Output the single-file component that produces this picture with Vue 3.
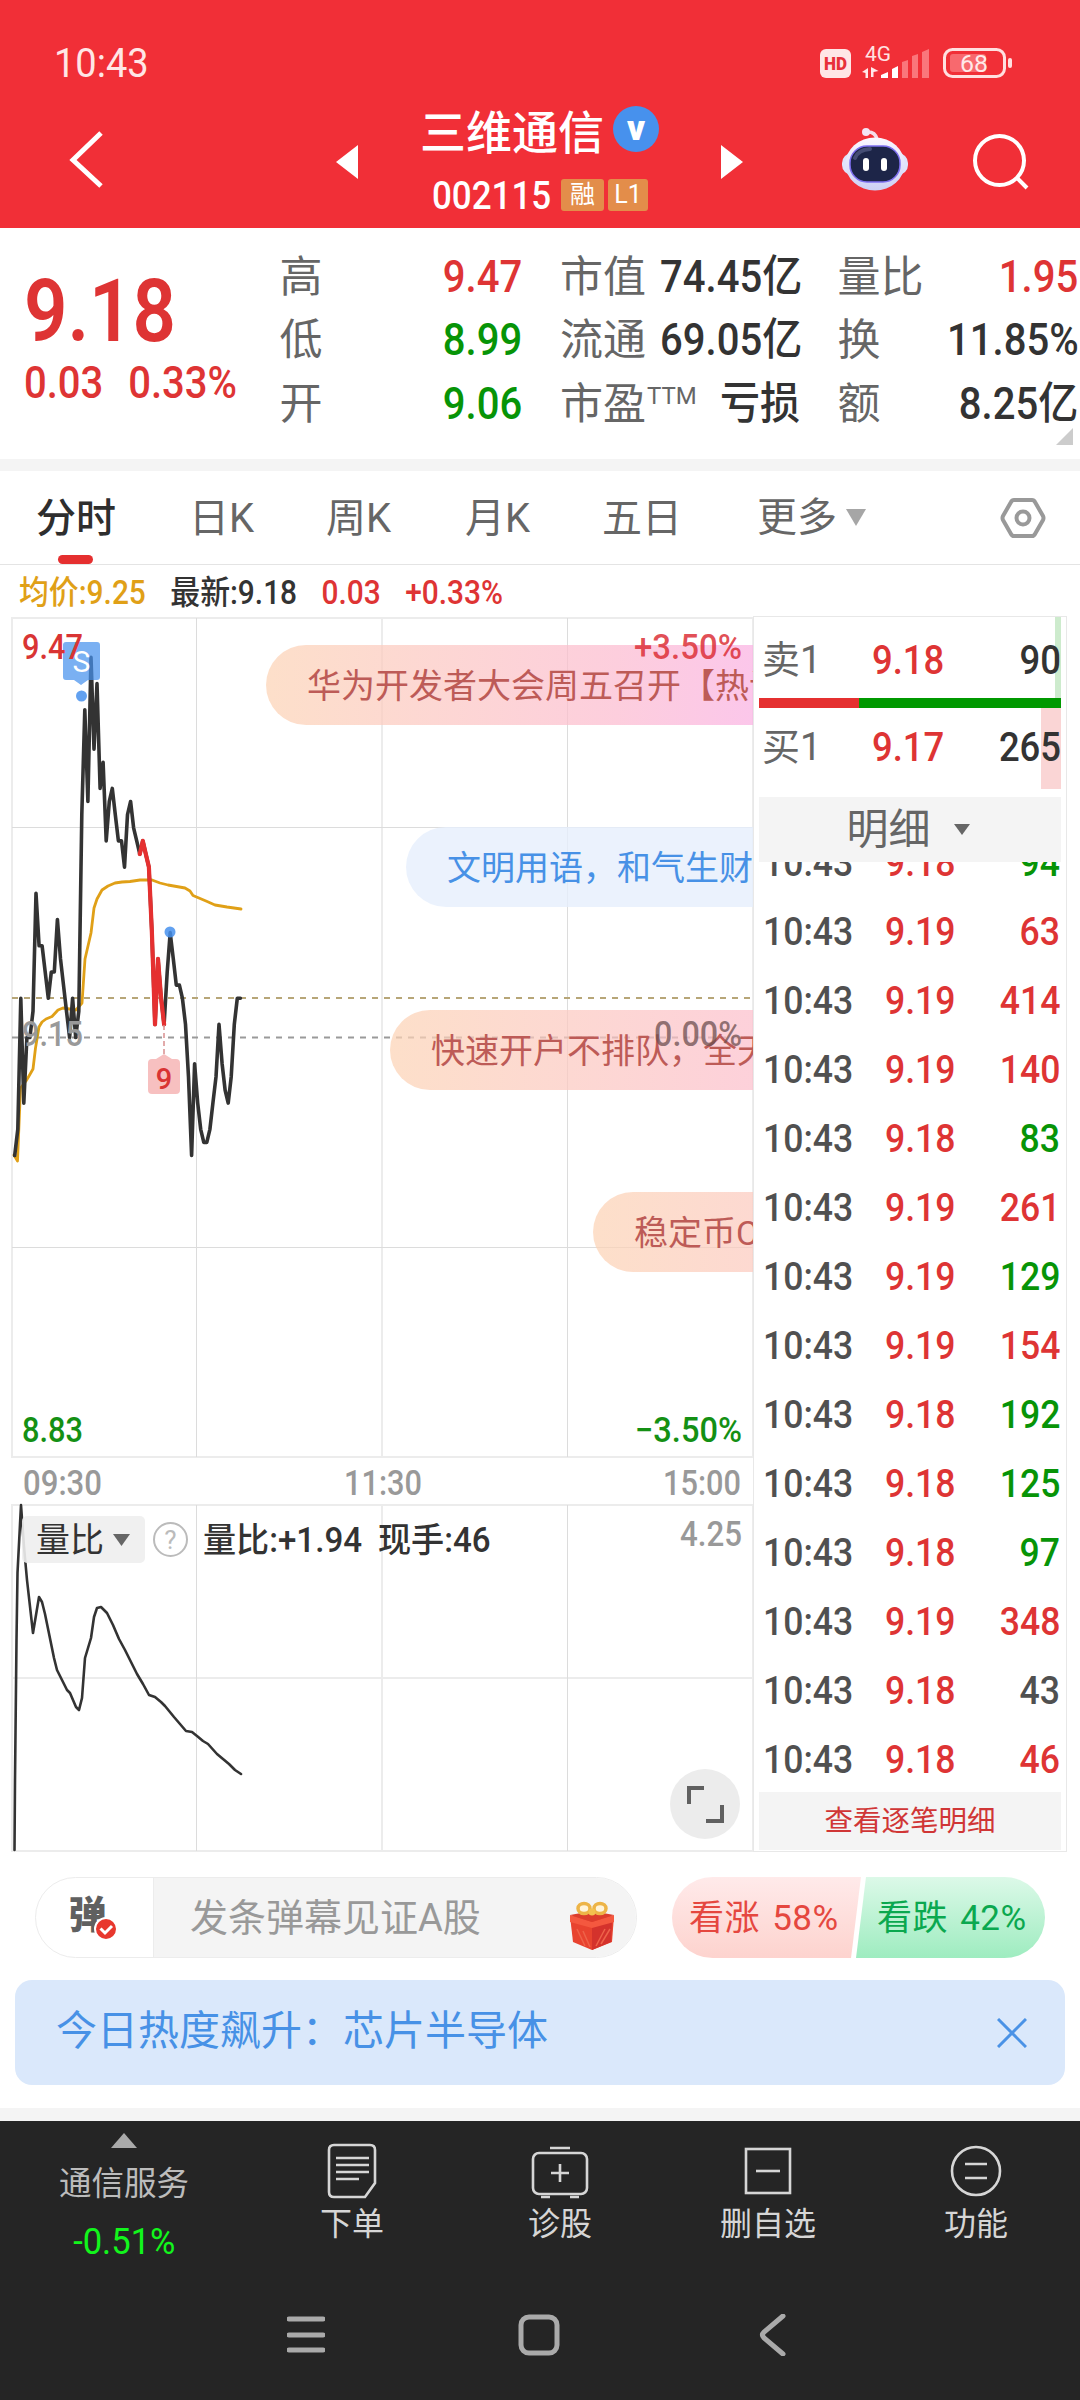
<script setup>
import { computed } from 'vue'

const stats = [
  [
    { label: '高', value: '9.47', tone: 'up' },
    { label: '低', value: '8.99', tone: 'down' },
    { label: '开', value: '9.06', tone: 'down' }
  ],
  [
    { label: '市值', value: '74.45亿' },
    { label: '流通', value: '69.05亿' },
    { label: '市盈', sup: 'TTM', value: '亏损' }
  ],
  [
    { label: '量比', value: '1.95', tone: 'up' },
    { label: '换', value: '11.85%' },
    { label: '额', value: '8.25亿' }
  ]
]

const tabs = ['分时', '日K', '周K', '月K', '五日']

const trades = [
  ['9.18', 94, 'down'],
  ['9.19', 63, 'up'],
  ['9.19', 414, 'up'],
  ['9.19', 140, 'up'],
  ['9.18', 83, 'down'],
  ['9.19', 261, 'up'],
  ['9.19', 129, 'down'],
  ['9.19', 154, 'up'],
  ['9.18', 192, 'down'],
  ['9.18', 125, 'down'],
  ['9.18', 97, 'down'],
  ['9.19', 348, 'up'],
  ['9.18', 43, 'flat'],
  ['9.18', 46, 'up']
]

// one price per minute, from 09:30
const prices = [
  9.06, 9.08, 9.18, 9.10, 9.15, 9.15, 9.17, 9.26, 9.22, 9.22,
  9.20, 9.18, 9.20, 9.20, 9.24, 9.21, 9.19, 9.17, 9.15, 9.18,
  9.15, 9.17, 9.32, 9.40, 9.33, 9.44, 9.37, 9.42, 9.34, 9.36,
  9.30, 9.33, 9.34, 9.32, 9.30, 9.30, 9.28, 9.32, 9.33, 9.31,
  9.30, 9.29, 9.30, 9.29, 9.28, 9.23, 9.16, 9.21, 9.18, 9.16,
  9.20, 9.23, 9.21, 9.19, 9.19, 9.18, 9.16, 9.12, 9.06, 9.13,
  9.10, 9.08, 9.07, 9.07, 9.08, 9.10, 9.12, 9.16, 9.13, 9.11,
  9.10, 9.12, 9.16, 9.18, 9.18
]

const toPoint = (p, i) =>
  `${(14.7 + i * 3.05).toFixed(1)},${(618 + (9.47 - p) * 1311).toFixed(1)}`

const points = computed(() => prices.map(toPoint))
const priceLine = computed(() => points.value.join(' '))
const nineLine = computed(() => points.value.slice(41, 50).join(' '))

const avgLine =
  '14,1155 17.5,1161 20.5,1088 26,1081 29,1076 33,1069 35.5,1048 39,1027 42,1022 46,1019 52,1016.5 58,1010 63,1008 76,1010 82,1003 85,959 91,933 94,908 97,899 102,890 108,886 115,883 122,882 130,881.5 140,880 152,880 160,883 168,885 185,888 190,891 193,895.5 206,901 215,905 227,907 241,909'

const ratioLine =
  '14.5,1850 15,1780 16.5,1640 17.5,1573 21,1505 24,1547 27,1580 33,1633 39,1597 42,1602 45,1614 54,1658 57,1670 67,1690 70,1693 76,1707 79,1710 82,1698 85,1658 91,1638 94,1617 97,1608 101,1607 107,1613 113,1625 119,1639 125,1650 137,1674 143,1684 149,1695 155,1697 161,1702 165,1706 174,1717 180,1724 186,1731 192,1732 197,1736 203,1741 208,1744 217,1754 229,1764 235,1770 241,1774'
</script>

<template>
  <div class="page">
    <header class="header">
      <div class="status">
        <span class="clock">10:43</span>
        <svg width="200" height="40" viewBox="816 43 200 40">
          <rect x="820" y="49" width="31" height="29" rx="6" fill="#ffe6e6" />
          <text x="824" y="69.5" font-size="18" font-weight="900" fill="#e8303a" textLength="23" lengthAdjust="spacingAndGlyphs">HD</text>
          <text x="865" y="61" font-size="21" fill="#ffe3e3" textLength="26" lengthAdjust="spacingAndGlyphs">4G</text>
          <path d="M862 72l6-4v10h-2.500v-5zM871 67v10h2.500v-5l5-1z" fill="#ffe9e9" />
          <path d="M881 78v-3l7-3v6zM892 78v-9l6-3v12z" fill="#fff" />
          <path d="M902 78V62l6-2v18zM912 78V56l6-2v24zM922 78V52l7-3v29z" fill="#fa767b" />
          <rect x="944.500" y="49.500" width="60" height="27" rx="8" fill="none" stroke="#ffe0e0" stroke-width="3" />
          <rect x="950" y="54" width="36" height="18" rx="3" fill="#f8696e" />
          <rect x="1008" y="58" width="4" height="10" rx="2" fill="#ffe0e0" />
          <text x="960" y="71.500" font-size="24" fill="#ffe9e9" textLength="28" lengthAdjust="spacingAndGlyphs">68</text>
        </svg>
      </div>
      <div class="titlebar">
        <svg class="back" width="40" height="64" viewBox="66 128 40 64">
          <path d="M101 133L73 160l28 26" fill="none" stroke="#fff" stroke-width="5" />
        </svg>
        <svg class="prev" width="22" height="34" viewBox="0 0 22 34"><path d="M22 0v34L0 17z" fill="#fff" /></svg>
        <div class="stock">
          <div class="name">
            <span>三维通信</span>
            <svg width="46" height="46" viewBox="0 0 46 46">
              <circle cx="23" cy="23" r="23" fill="#4791ed" />
              <text x="23" y="34" font-size="35" font-weight="900" text-anchor="middle" fill="#fff">v</text>
            </svg>
          </div>
          <div class="code">
            <span class="digits">002115</span>
            <i class="tag">融</i>
            <i class="tag l1">L1</i>
          </div>
        </div>
        <svg class="next" width="22" height="34" viewBox="0 0 22 34"><path d="M0 0v34l22-17z" fill="#fff" /></svg>
        <svg class="robot" width="68" height="66" viewBox="841 127 68 66">
          <defs>
            <linearGradient id="shell" x1="0" y1="0" x2="0" y2="1">
              <stop offset="0" stop-color="#fbf7ff" />
              <stop offset="1" stop-color="#cdd0f4" />
            </linearGradient>
          </defs>
          <path d="M866 132q9-1 11 7" fill="none" stroke="#f6dcea" stroke-width="3.500" />
          <circle cx="866" cy="132" r="4" fill="#f4e4f4" />
          <rect x="842" y="153" width="66" height="22" rx="10" fill="#dfe3fb" />
          <ellipse cx="875" cy="164" rx="29.500" ry="26.500" fill="url(#shell)" />
          <rect x="850" y="146" width="50" height="36" rx="17" fill="#1d2548" stroke="#7e6ff0" stroke-width="1.500" />
          <path d="M855 158q3-8 15-9" fill="none" stroke="#454d74" stroke-width="4" stroke-linecap="round" />
          <rect x="863" y="158" width="6" height="13" rx="3" fill="#fff" />
          <rect x="881" y="158" width="6" height="13" rx="3" fill="#fff" />
        </svg>
        <svg class="search" width="58" height="58" viewBox="971 132 58 58">
          <circle cx="999.500" cy="160.500" r="24.500" fill="none" stroke="#fff" stroke-width="4" />
          <path d="M1016 177l11 11" stroke="#fff" stroke-width="4" />
        </svg>
      </div>
    </header>

    <section class="quote">
      <div class="price up">
        <div class="big">9.18</div>
        <div class="change"><span>0.03</span><span>0.33%</span></div>
      </div>
      <div v-for="(col, c) in stats" :key="c" class="col">
        <div v-for="s in col" :key="s.label" class="stat">
          <span class="label">{{ s.label }}<sup v-if="s.sup">{{ s.sup }}</sup></span>
          <span class="value" :class="s.tone">{{ s.value }}</span>
        </div>
      </div>
      <svg class="corner" width="17" height="17" viewBox="0 0 17 17"><path d="M17 0v17H0z" fill="#ccc" /></svg>
    </section>

    <nav class="tabs">
      <span v-for="(t, i) in tabs" :key="t" class="tab" :class="{ active: i === 0 }">{{ t }}</span>
      <span class="tab more">更多<svg width="20" height="17" viewBox="0 0 20 17"><path d="M0 0h20L10 17z" fill="#a6a6a6" /></svg></span>
      <svg class="gear" width="46" height="42" viewBox="0 0 46 42">
        <path d="M14 3h18q2 0 3 2l8 14q1 2 0 4l-8 14q-1 2-3 2H14q-2 0-3-2L3 23q-1-2 0-4l8-14q1-2 3-2z" fill="none" stroke="#999" stroke-width="4" />
        <circle cx="23" cy="21" r="6.500" fill="none" stroke="#999" stroke-width="4" />
      </svg>
    </nav>

    <div class="legend">
      <span class="avg">均价:9.25</span>
      <span class="last">最新:9.18</span>
      <span class="up">0.03</span>
      <span class="up">+0.33%</span>
    </div>

    <main class="market">
      <div class="canvas">
        <svg width="754" height="1236" viewBox="0 616 754 1236">
          <g fill="none" stroke="#ececec" stroke-width="2">
            <rect x="12" y="618" width="741" height="839" />
            <rect x="12" y="1505" width="741" height="346" />
            <path d="M382 618v839M382 1505v346M12 1678h741" />
            <path d="M196.500 618v839M567.500 618v839M12 827.500h741M12 1247.500h741M196.500 1505v346M567.500 1505v346" stroke="#dcdcdc" stroke-width="1" />
          </g>
          <path d="M12 998h741" stroke="#b7a678" stroke-width="2" stroke-dasharray="6 6" />
          <path d="M12 1037.500h741" stroke="#9a9a9a" stroke-width="2" stroke-dasharray="6 6" />
          <g fill="none" stroke-linejoin="round" stroke-linecap="round">
            <polyline :points="avgLine" stroke="#e0a017" stroke-width="2.800" />
            <polyline :points="priceLine" stroke="#333" stroke-width="3.600" />
            <polyline :points="nineLine" stroke="#e53030" stroke-width="4.200" />
            <polyline :points="ratioLine" stroke="#333" stroke-width="2.600" />
          </g>
          <g fill="#4791ed" fill-opacity=".72">
            <path d="M66 642h31q3 0 3 3v32q0 3-3 3h-9l-7 5-7-5h-8q-3 0-3-3v-32q0-3 3-3z" />
            <circle cx="81.500" cy="696" r="5.500" fill-opacity=".85" />
            <circle cx="170" cy="932" r="5.500" fill-opacity=".85" />
          </g>
          <text x="81.500" y="672" font-size="30" text-anchor="middle" fill="#fff">S</text>
          <path d="M164 1025v30" stroke="#d98f8f" stroke-width="1.500" stroke-dasharray="5 3" />
          <path d="M152 1059h4l8-5 8 5h4q4 0 4 4v27q0 4-4 4h-24q-4 0-4-4v-27q0-4 4-4z" fill="#e53030" fill-opacity=".3" />
          <g font-weight="500" font-size="35">
            <text x="164" y="1088.500" font-size="29" text-anchor="middle" fill="#d93434">9</text>
            <text x="22" y="659" fill="#d93434" textLength="61" lengthAdjust="spacingAndGlyphs">9.47</text>
            <text x="22" y="1046" fill="#999" textLength="61" lengthAdjust="spacingAndGlyphs">9.15</text>
            <text x="22" y="1442" fill="#149014" textLength="61" lengthAdjust="spacingAndGlyphs">8.83</text>
            <text x="635" y="1442" fill="#149014" textLength="107" lengthAdjust="spacingAndGlyphs">−3.50%</text>
            <g fill="#999">
              <text x="23" y="1495" textLength="79" lengthAdjust="spacingAndGlyphs">09:30</text>
              <text x="344" y="1495" textLength="78" lengthAdjust="spacingAndGlyphs">11:30</text>
              <text x="663" y="1495" textLength="78" lengthAdjust="spacingAndGlyphs">15:00</text>
              <text x="680" y="1546" textLength="62" lengthAdjust="spacingAndGlyphs">4.25</text>
            </g>
          </g>
        </svg>
        <div class="bullet b1">华为开发者大会周五召开【热议】</div>
        <div class="bullet b2">文明用语，和气生财</div>
        <div class="bullet b3">快速开户不排队，全天</div>
        <div class="bullet b4">稳定币CRCL</div>
        <!-- percent labels stay readable on top of the bullets -->
        <svg class="percent" width="120" height="440" viewBox="630 616 120 440">
          <g font-weight="500" font-size="35">
            <text x="634" y="659" fill="#dc3038" fill-opacity=".85" textLength="108" lengthAdjust="spacingAndGlyphs">+3.50%</text>
            <text x="654" y="1046" fill="#6e4f50" fill-opacity=".75" textLength="88" lengthAdjust="spacingAndGlyphs">0.00%</text>
          </g>
        </svg>
        <div class="indicator">
          <span class="pick">量比<svg width="17" height="12" viewBox="0 0 17 12"><path d="M0 0h17L8.500 12z" fill="#666" /></svg></span>
          <span class="help">?</span>
          <span class="read">量比:+1.94</span>
          <span class="read">现手:46</span>
        </div>
        <div class="expand">
          <svg width="70" height="70" viewBox="0 0 70 70">
            <path d="M19 35V19h15M52 36v16H36" fill="none" stroke="#606060" stroke-width="4" />
          </svg>
        </div>
      </div>

      <aside class="book">
        <div class="level sell"><span class="side">卖1</span><span class="n up">9.18</span><span class="n vol">90</span></div>
        <div class="balance"><i></i></div>
        <div class="level buy"><span class="side">买1</span><span class="n up">9.17</span><span class="n vol">265</span></div>
        <div class="detail">明细<svg width="16" height="11" viewBox="0 0 16 11"><path d="M0 0h16L8 11z" fill="#666" /></svg></div>
        <div class="trades">
          <div v-for="(t, i) in trades" :key="i" class="trade">
            <span class="n time">10:43</span>
            <span class="n up">{{ t[0] }}</span>
            <span class="n vol" :class="t[2]">{{ t[1] }}</span>
          </div>
        </div>
        <div class="all">查看逐笔明细</div>
      </aside>
    </main>

    <section class="social">
      <div class="danmu">
        <div class="switch">
          <b>弹</b>
          <svg width="24" height="24" viewBox="0 0 24 24">
            <circle cx="12" cy="12" r="11" fill="#e8382e" stroke="#fff" stroke-width="2" />
            <path d="M6.500 11.500l4.500 4.500 7-7" fill="none" stroke="#fff" stroke-width="3" />
          </svg>
        </div>
        <div class="input">
          <span>发条弹幕见证A股</span>
          <svg width="46" height="50" viewBox="0 0 46 50">
            <path d="M1 15l22-4 22 4-2 26-20 8-19-8z" fill="#e8432f" />
            <path d="M23 25l20-5-1 21-19 8z" fill="#d4322c" />
            <path d="M1 14l22 7 22-7v7l-22 6-22-6z" fill="#f4583f" />
            <path d="M1 14l22-4 22 4-22 7z" fill="#dc3d2c" />
            <path d="M8 28l8 17M14 30l7 16M36 28l-9 17M41 28l-9 15" stroke="#ee6249" stroke-width="1.500" />
            <g fill="#fff3d8" stroke="#edb447" stroke-width="3.500">
              <ellipse cx="15" cy="7.500" rx="6" ry="5" />
              <ellipse cx="31" cy="7.500" rx="6" ry="5" />
            </g>
            <circle cx="23" cy="11" r="3.500" fill="#f3c24f" />
          </svg>
        </div>
      </div>
      <div class="vote">
        <div class="bull"><span>看涨 58%</span></div>
        <div class="bear"><span>看跌 42%</span></div>
      </div>
    </section>

    <div class="hot">
      <span>今日热度飙升：芯片半导体</span>
      <svg width="30" height="30" viewBox="0 0 30 30"><path d="M1 1l28 28M29 1L1 29" stroke="#4a92e6" stroke-width="3" /></svg>
    </div>

    <footer class="bottom">
      <div class="actions">
        <div class="sector">
          <svg width="26" height="15" viewBox="0 0 26 15"><path d="M13 0l13 15H0z" fill="#aaa" /></svg>
          <span class="sname">通信服务</span>
          <span class="schg">-0.51%</span>
        </div>
        <div class="action">
          <svg width="60" height="60" viewBox="0 0 60 60">
            <path d="M12 4h36q5 0 5 5v33L43 56H12q-5 0-5-5V9q0-5 5-5z" />
            <path d="M14 17h33M14 24h33M14 31h33M14 38h23" />
          </svg>
          <span>下单</span>
        </div>
        <div class="action">
          <svg width="60" height="60" viewBox="0 0 60 60">
            <rect x="3" y="12" width="54" height="41" rx="6" />
            <path d="M20 7h20M11 56h9M40 56h9M21 32h18M30 23v18" />
          </svg>
          <span>诊股</span>
        </div>
        <div class="action">
          <svg width="60" height="60" viewBox="0 0 60 60">
            <rect x="8" y="8" width="44" height="44" />
            <path d="M18 30h24" />
          </svg>
          <span>删自选</span>
        </div>
        <div class="action">
          <svg width="60" height="60" viewBox="0 0 60 60">
            <circle cx="30" cy="30" r="24" />
            <path d="M19 23h22M19 37h22" />
          </svg>
          <span>功能</span>
        </div>
      </div>
      <div class="sysnav">
        <svg width="38" height="42" viewBox="0 0 38 42"><path d="M2 5h34M2 21h34M2 36h34" /></svg>
        <svg width="42" height="42" viewBox="0 0 42 42"><rect x="3" y="3" width="36" height="36" rx="8" /></svg>
        <svg width="27" height="42" viewBox="0 0 27 42"><path d="M24 2L5 18q-3 3 0 6l19 16" /></svg>
      </div>
    </footer>
  </div>
</template>

<style>
body {
  background: #fff;
}
</style>

<style scoped>
.page {
  width: 1080px;
  height: 2400px;
  overflow: hidden;
  display: flex;
  flex-direction: column;
  font-family: Roboto, "Noto Sans CJK SC", sans-serif;
  color: #333;
  background: #fff;
  white-space: nowrap;
}
svg {
  display: block;
  flex: none;
}
.up {
  color: #de3434;
}
.down {
  color: #079407;
}
.flat {
  color: #505050;
}

/* header */
.header {
  height: 228px;
  box-sizing: border-box;
  padding-top: 43px;
  background: #f12f37;
  color: #fff;
}
.status {
  height: 40px;
  display: flex;
  justify-content: space-between;
  align-items: center;
  padding: 0 64px 0 54px;
}
.clock {
  font-size: 40px;
  padding-top: 1px;
  color: #ffe6e6;
  transform: scaleX(.95);
  transform-origin: left;
}
.titlebar {
  height: 145px;
  display: flex;
  align-items: center;
}
.back {
  margin: 8px 0 0 66px;
}
.prev {
  margin: 13px 0 0 230px;
}
.stock {
  margin-left: 62px;
  width: 240px;
  padding-top: 13px;
}
.name {
  display: flex;
  align-items: center;
  height: 62px;
  font-size: 46px;
}
.name svg {
  margin-left: 10px;
}
.name span {
  font-weight: 500;
  width: 183px;
}
.code {
  display: flex;
  align-items: center;
  height: 64px;
  padding: 3px 0 0 12px;
  font-size: 38px;
  font-weight: 500;
}
.digits {
  width: 129px;
  padding-top: 3px;
  transform: scaleX(.92);
  transform-origin: left;
}
.tag {
  width: 43px;
  height: 32px;
  line-height: 32px;
  border-radius: 3px;
  background: #e38d4a;
  font-size: 25px;
  font-style: normal;
  font-weight: 400;
  text-align: center;
}
.tag.l1 {
  width: 40px;
  margin-left: 4px;
}
.next {
  margin: 13px 0 0 61px;
}
.robot {
  margin: 8px 0 0 98px;
}
.search {
  margin: 10px 0 0 62px;
}

/* quote */
.quote {
  position: relative;
  height: 231px;
  box-sizing: border-box;
  padding-top: 17px;
  display: grid;
  grid-template-columns: 242px 243px 240px 241px;
  column-gap: 37.5px;
  margin-right: 1px;
}
.price {
  padding-left: 24px;
}
.big {
  height: 132px;
  line-height: 132px;
  font-size: 88px;
  font-weight: 600;
  transform: scaleX(.865);
  transform-origin: left;
}
.change {
  display: flex;
  gap: 27px;
  font-size: 43.5px;
  height: 14px;
  line-height: 14px;
  font-weight: 500;
  transform: scaleX(.92);
  transform-origin: left;
}
.stat {
  display: flex;
  justify-content: space-between;
  align-items: center;
  height: 63.5px;
  font-size: 44px;
  line-height: 60px;
}
.label {
  color: #666;
  font-size: 43px;
}
.label sup {
  font-size: 24px;
  line-height: 1;
  vertical-align: 15px;
  margin-left: 1px;
}
.value {
  font-weight: 500;
  transform: scaleX(.91);
  transform-origin: right;
}
.corner {
  position: absolute;
  right: 6px;
  top: 200px;
}

/* tabs */
.tabs {
  height: 106px;
  box-sizing: border-box;
  border-top: 12px solid #f4f4f4;
  border-bottom: 1px solid #e4e4e4;
  display: flex;
  align-items: center;
  font-size: 40px;
  color: #666;
  padding-left: 36px;
}
.tab {
  position: relative;
  height: 93px;
  line-height: 95px;
}
.tab:nth-child(1) { width: 153px; }
.tab:nth-child(2) { width: 137px; }
.tab:nth-child(3) { width: 139px; }
.tab:nth-child(4) { width: 137px; }
.tab:nth-child(5) { width: 155px; }
.active {
  color: #2e2e2e;
  font-weight: 500;
}
.active::after {
  content: "";
  position: absolute;
  left: 22px;
  bottom: 0;
  width: 35px;
  height: 9px;
  border-radius: 5px;
  background: #e52f2f;
}
.more {
  display: flex;
  align-items: center;
  width: 243px;
}
.more svg {
  margin-left: 9px;
}

.legend {
  height: 51px;
  display: flex;
  align-items: center;
  padding: 5px 0 0 21px;
  box-sizing: border-box;
  font-size: 33px;
  line-height: 46px;
  font-weight: 500;
  transform: scaleX(.905);
  transform-origin: left;
  gap: 27px;
}
.avg {
  color: #e0a017;
}

/* charts */
.market {
  display: flex;
  height: 1237px;
}
.canvas {
  position: relative;
  width: 753px;
  height: 1236px;
  overflow: hidden;
}
.bullet {
  position: absolute;
  width: 640px;
  height: 80px;
  box-sizing: border-box;
  padding-left: 41px;
  line-height: 82px;
  border-radius: 40px;
  font-size: 34px;
  color: #bd5b57;
  background: linear-gradient(90deg, rgba(252, 211, 181, .72), rgba(252, 198, 196, .72) 30%, rgba(252, 187, 208, .72) 55%, rgba(250, 176, 228, .72) 78%);
}
.b1 { left: 266px; top: 29px; }
.b2 { left: 406px; top: 211px; color: #4791e6; background: rgba(230, 239, 253, .8); }
.b3 { left: 390px; top: 394px; width: 780px; }
.b4 { left: 593px; top: 576px; width: 780px; }
.percent {
  position: absolute;
  left: 630px;
  top: 0;
}
.indicator {
  position: absolute;
  left: 22px;
  top: 900px;
  height: 47px;
  display: flex;
  align-items: center;
  font-size: 34px;
}
.pick {
  display: flex;
  align-items: center;
  width: 109px;
  height: 47px;
  padding-left: 14px;
  line-height: 48px;
  border-radius: 5px;
  background: rgba(238, 238, 238, .9);
}
.pick svg {
  margin-left: 9px;
}
.help {
  width: 31px;
  height: 31px;
  line-height: 32px;
  margin-left: 8px;
  border: 2px solid #bbb;
  border-radius: 50%;
  font-size: 26px;
  text-align: center;
  color: #bbb;
}
.read {
  margin-left: 15px;
  width: 160px;
  line-height: 48px;
  font-size: 34.5px;
  font-weight: 500;
  transform: scaleX(.96);
  transform-origin: left;
}
.expand {
  position: absolute;
  left: 670px;
  top: 1153px;
  width: 70px;
  height: 70px;
  border-radius: 50%;
  background: #ececec;
}

/* order book */
.book {
  width: 314px;
  height: 1236px;
  box-sizing: border-box;
  border: 1px solid #e8e8e8;
  padding: 0 5px;
  display: flex;
  flex-direction: column;
}
.n {
  font-weight: 500;
  transform: scaleX(.9);
  transform-origin: left;
}
.vol {
  margin-left: auto;
  transform-origin: right;
}
.level {
  height: 81px;
  box-sizing: border-box;
  display: flex;
  align-items: center;
  font-size: 40.5px;
  line-height: 78px;
  padding: 4px 0 0 3px;
}
.side {
  width: 110px;
  font-size: 38px;
  color: #666;
}
.sell {
  background: linear-gradient(#cdebcd, #cdebcd) right / 6px 100% no-repeat;
}
.buy {
  height: 81px;
  background: linear-gradient(#fad5d5, #fad5d5) right / 20px 100% no-repeat;
  padding: 0 0 3px 3px;
}
.balance {
  height: 10px;
  background: #009900;
}
.balance i {
  display: block;
  width: 100px;
  height: 10px;
  background: #e53030;
}
.detail {
  margin-top: 8px;
  height: 65px;
  display: flex;
  align-items: center;
  justify-content: center;
  gap: 23px;
  padding-right: 4px;
  font-size: 42px;
  line-height: 67px;
  background: #f4f4f4;
  color: #666;
}
.trades {
  height: 930px;
  overflow: hidden;
}
.trade {
  display: flex;
  height: 69px;
  line-height: 69px;
  font-size: 39.5px;
  padding: 0 1px 0 4px;
}
.trade:first-child {
  margin-top: -34px;
}
.time {
  width: 122px;
  color: #505050;
}
.all {
  height: 58px;
  line-height: 60px;
  background: #f4f4f4;
  text-align: center;
  font-size: 28.5px;
  color: #d03636;
}

/* social */
.social {
  display: flex;
  height: 81px;
  margin: 24px 35px 0;
}
.danmu {
  width: 602px;
  box-sizing: border-box;
  display: flex;
  border: 1px solid #ececec;
  border-radius: 41px;
  overflow: hidden;
}
.switch {
  position: relative;
  width: 117px;
  border-right: 1px solid #ececec;
  text-align: center;
  line-height: 75px;
}
.switch b {
  display: block;
  padding-right: 14px;
  font-size: 38px;
  font-weight: 900;
  color: #606060;
}
.switch svg {
  position: absolute;
  left: 58px;
  top: 39px;
}
.input {
  flex: 1;
  display: flex;
  align-items: center;
  justify-content: space-between;
  padding: 0 21px 0 36px;
  background: #f4f4f4;
  color: #999;
  font-size: 38px;
  line-height: 78px;
}
.input svg {
  margin-top: 16px;
}
.vote {
  display: flex;
  margin-left: 35px;
  font-size: 35px;
  line-height: 84px;
}
.bull {
  width: 189px;
  color: #e5473f;
  background: linear-gradient(#ffeaea, #fdd3ce);
  border-radius: 41px 0 0 41px;
  clip-path: polygon(0 0, 100% 0, 179px 100%, 0 100%);
}
.bear {
  width: 189px;
  margin-left: -5px;
  color: #0ba84f;
  background: linear-gradient(#dcf9e8, #9eecc0);
  border-radius: 0 41px 41px 0;
  clip-path: polygon(10px 0, 100% 0, 100% 100%, 0 100%);
}
.vote span {
  display: inline-block;
  margin-left: 17px;
  word-spacing: 3px;
  letter-spacing: .5px;
}
.bear span {
  margin-left: 21px;
}

.hot {
  display: flex;
  align-items: center;
  justify-content: space-between;
  height: 105px;
  box-sizing: border-box;
  margin: 22px 15px 0;
  padding: 0 38px 0 41px;
  border-radius: 17px;
  background: #dae8fb;
  color: #4791e6;
  font-size: 41px;
}
.hot span {
  line-height: 60px;
  padding-bottom: 3px;
}

/* bottom */
.bottom {
  height: 292px;
  box-sizing: border-box;
  margin-top: 23px;
  border-top: 13px solid #f4f4f4;
  background: #252525;
}
.actions {
  display: flex;
  height: 150px;
}
.sector {
  width: 248px;
  display: flex;
  flex-direction: column;
  align-items: center;
  padding-top: 12px;
  box-sizing: border-box;
}
.sname {
  margin-top: 14px;
  line-height: 44px;
  font-size: 32.5px;
  color: #bcbcbc;
}
.schg {
  margin-top: 16px;
  line-height: 40px;
  font-size: 36px;
  color: #12f51c;
  transform: scaleX(.96);
}
.action {
  width: 208px;
  display: flex;
  flex-direction: column;
  align-items: center;
  padding-top: 20px;
  font-size: 32px;
  line-height: 47px;
  color: #d6d6d6;
}
.action svg {
  fill: none;
  stroke: #d6d6d6;
  stroke-width: 2.6;
}
.sysnav {
  display: flex;
  align-items: center;
  height: 128px;
  padding-left: 287px;
}
.sysnav svg {
  fill: none;
  stroke: #aaa;
  stroke-width: 5;
  stroke-linecap: round;
}
.sysnav svg + svg {
  margin-left: 193px;
}
.sysnav svg:last-child {
  margin-left: 199px;
}
</style>
